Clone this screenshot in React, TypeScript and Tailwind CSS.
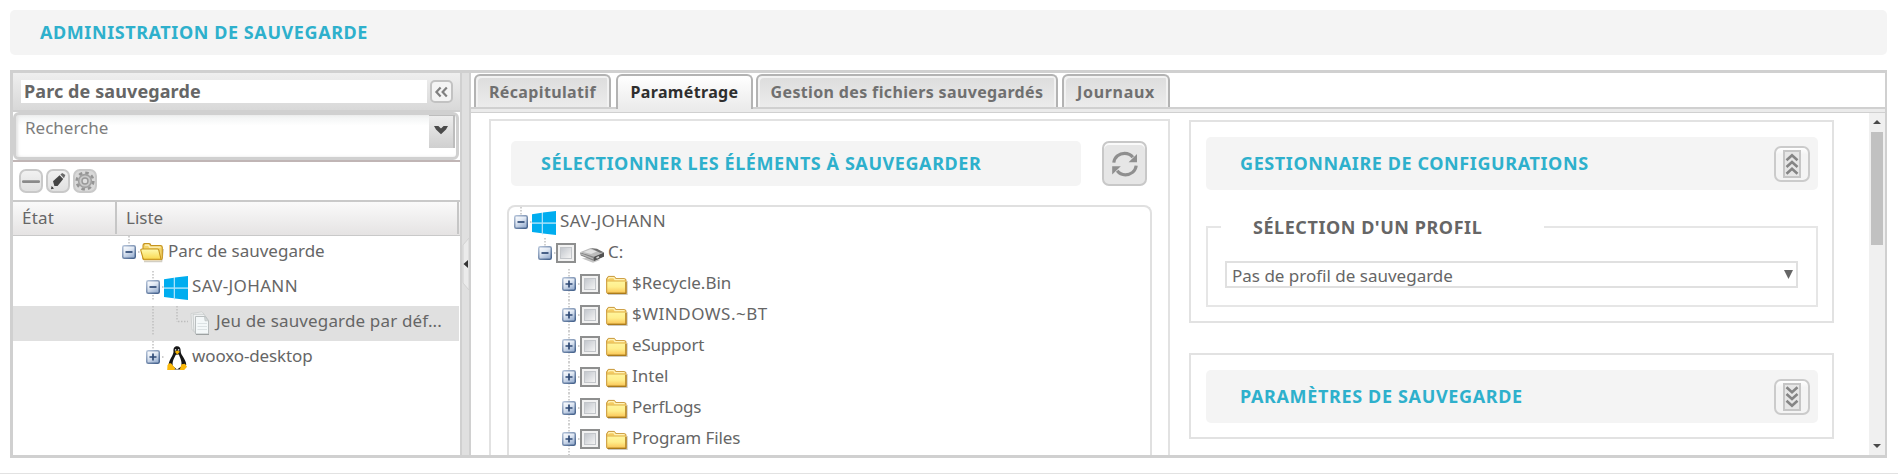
import type { ReactNode } from "react";

type CellKind = "minus-top" | "minus" | "plus-top" | "plus" | "line" | "elbow";

function TreeCell({ kind, h, cy }: { kind: CellKind; h: number; cy: number }) {
  const box = kind !== "line" && kind !== "elbow";
  const plus = kind === "plus" || kind === "plus-top";
  const end = kind === "line" || kind === "minus" || kind === "plus" ? h : kind === "elbow" ? cy : cy - 7;
  return (
    <svg className="shrink-0" width="24" height={h} viewBox={`0 0 24 ${h}`}>
      <defs>
        <linearGradient id="toggleFill" x1="0" y1="0" x2="0.6" y2="1">
          <stop offset="0" stopColor="#ffffff" />
          <stop offset="0.45" stopColor="#e4ebf5" />
          <stop offset="1" stopColor="#9fb4d3" />
        </linearGradient>
        <linearGradient id="toggleEdge" x1="0" y1="0" x2="0.8" y2="1">
          <stop offset="0" stopColor="#b4c3d9" />
          <stop offset="1" stopColor="#4a668f" />
        </linearGradient>
      </defs>
      <path d={`M13 0V${end}`} stroke="#bdbdbd" strokeWidth="1.4" strokeDasharray="1.5 1.5" />
      <path d={kind === "elbow" ? `M14 ${cy}H24` : box ? `M22 ${cy}H24` : ""} stroke="#bdbdbd" strokeWidth="1.4" strokeDasharray="1.5 1.5" />
      {box && (
        <>
          <rect x="6.75" y={cy - 6.25} width="12.5" height="12.5" rx="1.5" fill="url(#toggleFill)" stroke="url(#toggleEdge)" strokeWidth="1.5" />
          <path d={`M9.5 ${cy}H16.5${plus ? `M13 ${cy - 3.5}V${cy + 3.5}` : ""}`} stroke="#2f4a75" strokeWidth="1.7" />
        </>
      )}
    </svg>
  );
}

function WindowsIcon() {
  return (
    <svg className="shrink-0" width="24" height="24" viewBox="0 0 24 24">
      <path fill="#a8e2fa" d="M9.8 1.7 11 1.5V24L9.8 22.3zM0 11.4H24V12.7H0z" />
      <path fill="#00adef" d="M0 3.2 9.8 1.7V11.4H0zM11 1.5 24 0V11.4H11zM0 12.7H9.8V22.3L0 20.9zM11 12.7H24V24L11 22.5z" />
    </svg>
  );
}

function OpenFolderIcon() {
  return (
    <svg className="shrink-0" width="24" height="24" viewBox="0 0 24 24">
      <defs>
        <linearGradient id="openFolder" x1="0" y1="0" x2="0" y2="1">
          <stop offset="0" stopColor="#fffbb0" />
          <stop offset="1" stopColor="#f9d850" />
        </linearGradient>
      </defs>
      <path d="M4 20.5H21.5L23.3 8" stroke="#bfb9aa" strokeWidth="1.6" fill="none" opacity="0.7" />
      <path d="M3 18V4.5Q3 3 4.5 2.6H9Q10.5 2.6 11 4.6H20.5Q22.3 4.6 22.3 6.2V17Q22.3 18.8 20.5 18.8H4Z" fill="#f3d468" stroke="#c6941f" strokeWidth="1.1" />
      <path d="M5 4.2H8.6L9.6 6.2H20.6" stroke="#fff3c0" strokeWidth="1.2" fill="none" />
      <path d="M.8 9.3Q.6 8 2 8H17.4Q18.5 8 18.8 9.2L21 18.2H4.2Q3.2 18.2 3 17.2Z" fill="url(#openFolder)" stroke="#c6941f" strokeWidth="1.1" />
    </svg>
  );
}

function FolderIcon() {
  return (
    <svg className="mt-1.5 shrink-0" width="24" height="21" viewBox="0 0 24 21">
      <defs>
        <linearGradient id="folderFill" x1="0" y1="0" x2="0" y2="1">
          <stop offset="0" stopColor="#fff59d" />
          <stop offset="0.5" stopColor="#ffee8c" />
          <stop offset="1" stopColor="#fbc85a" />
        </linearGradient>
      </defs>
      <path d="M4 19.3H23.1V6" stroke="#b5b0a5" strokeWidth="1.2" fill="none" opacity="0.7" />
      <path d="M2.6 17.5V3.8L4.2 1.4H10.4L12 3.6H20.4Q22 3.6 22 5.2V17.8Q22 18.4 21 18.4H4Q2.6 18.4 2.6 17.5Z" fill="#f3cb62" stroke="#c99a3e" strokeWidth="1" />
      <path d="M4.4 3.8 5.2 2.6H9.8L11 4.7H20.6" stroke="#fff2b8" strokeWidth="1.3" fill="none" />
      <path d="M3 6.2H21.6V17.7H4L3 17Z" fill="url(#folderFill)" stroke="#dbb04e" strokeWidth="0.6" />
      <path d="M3.6 18.3H22V7" stroke="#ad7b1a" strokeWidth="1.2" fill="none" />
    </svg>
  );
}

function DriveIcon() {
  return (
    <svg className="mt-1.5 shrink-0" width="24" height="24" viewBox="0 0 24 24">
      <path d="M2 14.5 13 18.8 20 16 14 13Z" fill="#c4c4c4" />
      <path d="M0 8.4.8 11.6 14 17 24 12.4V8.6L14 11Z" fill="#858585" />
      <path d="M14 12.6V17L24 12.4V8.6Z" fill="#525252" />
      <path d="M0 8.2 10.5 4 24 8.4 14 12.8Z" fill="#bcbcbc" />
      <path d="M3.5 8 10.5 5.2 17 7.4 11 9.9Z" fill="#e2e2e2" />
      <path d="M10.5 4 17 4.8 24 8.4 20 8.8Z" fill="#6f6f6f" />
      <path d="M1 10 13 14.6" stroke="#b8b8b8" strokeWidth="1.2" />
      <path d="M16.5 14 19 12.8" stroke="#d4d4d4" strokeWidth="1.5" />
    </svg>
  );
}

function FilesIcon() {
  return (
    <svg className="mt-[5px] shrink-0" width="24" height="24" viewBox="0 0 24 24">
      <path d="M3 2.5 14 .8 16 3V19H4Z" fill="#f2f3f3" stroke="#cfd2d2" />
      <path d="M5 3.2H16L18 6V21H6Z" fill="#eef0f1" stroke="#c8cccc" />
      <path d="M7.5 5.5H17.5L20.5 9.5V23H7.5Z" fill="#f4f8f9" stroke="#b9bebf" />
      <path d="M16.5 5.5 17 9.8H20.5Z" fill="#d3d8da" stroke="#bcc1c2" strokeWidth="0.7" />
      <path d="M9.5 12.5H19M9.5 15.5H19M9.5 18.5H19" stroke="#dce2e4" />
      <path d="M8 23.5H21" stroke="#9da1a1" />
    </svg>
  );
}

function TuxIcon() {
  return (
    <svg className="mt-[5px] shrink-0" width="24" height="24" viewBox="0 0 24 24">
      <path d="M13 .3C10 .3 9.3 2.6 9.5 5.6 9.7 9 5.8 12.3 4.6 18.5L8 23.6H19L22.3 18.5C21.5 12.3 16.7 9.3 16.7 5.2 16.7 2 15.6.3 13 .3Z" fill="#151515" />
      <path d="M11.8 8.7C10.7 11.5 7.8 15 8.8 20L13 23.4 17.2 20.5C18.5 15 15.6 11.3 14.9 8.6Z" fill="#fff" />
      <path d="M10.8 5.7 13.2 4.4 16 5.8 13.2 8.6Z" fill="#f7b500" />
      <circle cx="11.6" cy="3.9" r="0.8" fill="#ddd" />
      <circle cx="14.6" cy="3.9" r="0.8" fill="#ddd" />
      <path d="M4.6 17.6 7 17.3 11.4 22.4 10.2 24H3.2L3.5 19.5Z" fill="#fcb90a" />
      <path d="M17.5 18.3 21 17.8 23 20.8 20.2 24H15.6Z" fill="#fcb90a" />
    </svg>
  );
}

function Checkbox() {
  return (
    <span className="mt-[5px] mr-1 size-5 shrink-0 border-2 border-[#8e8f8f] bg-[#f2f2f2] p-[2px]">
      <span className="block size-3 border border-[#c3c6ca] bg-linear-to-br from-[#c3c7cd] to-[#f4f4f4]" />
    </span>
  );
}

function RefreshIcon() {
  return (
    <svg width="28" height="28" viewBox="0 0 28 28" fill="none">
      <path d="M2.8 12.6C3.6 6.6 8.4 3.4 13.6 3.4 17.2 3.4 20 4.9 21.8 7.3" stroke="#8f8f8f" strokeWidth="3.2" />
      <path d="M26 4V12.2H17.6Z" fill="#8f8f8f" />
      <path d="M25.2 15.6C24.4 21.4 19.8 24.8 14.4 24.8 10.9 24.8 8 23.2 6.2 20.8" stroke="#8f8f8f" strokeWidth="3.2" />
      <path d="M1.2 24.6V16.2H9.8Z" fill="#8f8f8f" />
    </svg>
  );
}

function TripleChevron({ down = false }: { down?: boolean }) {
  return (
    <span className="flex size-9 items-center justify-center rounded-[7px] border-2 border-[#cbcbcb] bg-linear-to-b from-white to-[#f4f4f4] to-20%">
      <svg width="18" height="28" viewBox="0 0 18 28" fill="none">
        <rect x="1" y="1" width="16" height="26" fill="#e6e6e6" stroke="#c6c6c6" strokeWidth="2" />
        <g transform={down ? "matrix(1 0 0 -1 0 28)" : undefined} stroke="#858585" strokeWidth="2.6">
          <path d="M3.5 10.2 9 5.2 14.5 10.2M3.5 17 9 12 14.5 17M3.5 23.8 9 18.8 14.5 23.8" />
        </g>
      </svg>
    </span>
  );
}

function ToolButton({ children }: { children: ReactNode }) {
  return (
    <span className="flex size-6 items-center justify-center rounded-[7px] border-2 border-[#c9c9c9] bg-linear-to-b from-[#f1f1f1] to-[#e0e0e0]">
      {children}
    </span>
  );
}

function LeftRow({ indent, selected, children }: { indent: string; selected?: boolean; children: ReactNode }) {
  return (
    <div className={`mr-px flex h-[35px] items-start ${indent} ${selected ? "bg-[#e0e0e0]" : ""}`}>{children}</div>
  );
}

const leftText = "ml-1 text-[17px] leading-[29px] whitespace-nowrap";
const rightText = "ml-1 text-[17px] leading-[27px] whitespace-nowrap";

const folders = [
  ["$Recycle.Bin", "tracking-[0px]"],
  ["$WINDOWS.~BT", "tracking-[0.5px]"],
  ["eSupport", "tracking-[-0.2px]"],
  ["Intel", "tracking-[0px]"],
  ["PerfLogs", "tracking-[-0.15px]"],
  ["Program Files", "tracking-[-0.1px]"],
];

function Sidebar() {
  return (
    <aside className="flex w-[447px] shrink-0 flex-col">
      <div className="flex h-[39px] items-start border-b-2 border-[#d0d0d0] bg-linear-to-b from-[#efefef] to-[#d8d8d8] pt-[7px] pl-2">
        <div className="h-[23px] w-[406px] bg-white pl-[3px] text-[18px] leading-[23px] font-bold tracking-[0.1px] whitespace-nowrap">
          Parc de sauvegarde
        </div>
        <span className="ml-[3px] flex h-[23px] w-[23px] items-center justify-center rounded-[5px] border-2 border-[#c2c2c2] bg-[#f4f4f4]">
          <svg width="15" height="14" viewBox="0 0 15 14" fill="none" stroke="#808080" strokeWidth="2.2">
            <path d="M6.6 2.4 2.4 7 6.6 11.6M12.8 2.4 8.6 7 12.8 11.6" />
          </svg>
        </span>
      </div>
      <div className="h-[50px] border-b-2 border-[#c0b5b5]">
        <div className="flex h-12 w-[446px] items-start rounded-[6px] border-3 border-[#d0d0d0] bg-linear-to-b from-[#f0f2f2] to-white to-25% shadow-[inset_2px_0_3px_#e4e4e4]">
          <span className="w-[413px] pl-[9px] text-[17px] leading-[26px] text-[#7d7d7d]">Recherche</span>
          <span className="flex h-[33px] w-[26px] items-center justify-center border-t border-r-2 border-[#bdbdbd] bg-linear-to-b from-[#ededed] to-[#cfcfcf]">
            <svg className="mb-1" width="14" height="10" viewBox="0 0 14 10">
              <path d="M0 1H4.4L7 3.6 9.6 1H14L12 4.4 7 9.2 2 4.4Z" fill="#4a4a4a" />
            </svg>
          </span>
        </div>
      </div>
      <div className="flex h-[38px] items-center gap-[3px] pl-1.5">
        <ToolButton>
          <svg width="18" height="5" viewBox="0 0 18 5"><rect y="1.3" width="18" height="2.6" rx="1.2" fill="#8a8a8a" /></svg>
        </ToolButton>
        <ToolButton>
          <svg width="16" height="18" viewBox="0 0 16 18">
            <path d="M3 9.3 9.6 3.2 13.2 7.1 7.6 14 4.4 13.9Z" fill="#454545" />
            <path d="M10.4 2.5 12.2.9 15.4 3 13.9 6.3Z" fill="#6a6a6a" />
            <path d="M1 17.2 1.6 14 4 16.4Z" fill="#3a3a3a" />
          </svg>
        </ToolButton>
        <span className="flex size-6 items-center justify-center rounded-[7px] border-2 border-[#c9c9c9] bg-[#d9d9d9]">
          <svg width="20" height="20" viewBox="0 0 20 20" fill="none">
            <circle cx="10" cy="10" r="8.3" stroke="#959595" strokeWidth="2.6" strokeDasharray="3.5 3.02" />
            <circle cx="10" cy="10" r="6.4" fill="#c9c9c9" stroke="#a0a0a0" strokeWidth="1.6" />
            <circle cx="10" cy="10" r="3" fill="#dedede" stroke="#999" strokeWidth="1.4" />
          </svg>
        </span>
      </div>
      <div className="flex h-9 border-t-2 border-b border-[#c9c9c9] bg-linear-to-b from-[#fafafa] to-[#e5e3e3] text-[17px] leading-[31px]">
        <span className="mb-px w-[104px] border-r-2 border-[#c6c6c6] pl-[9px] tracking-[0.2px]">État</span>
        <span className="mr-px mb-px flex-1 border-r-2 border-[#c6c6c6] pl-[9px]">Liste</span>
      </div>
      <LeftRow indent="pl-[103px]">
        <TreeCell kind="minus-top" h={29} cy={16} />
        <span className="mt-[5px]"><OpenFolderIcon /></span>
        <span className={`${leftText} tracking-[0px]`}>Parc de sauvegarde</span>
      </LeftRow>
      <LeftRow indent="pl-[127px]">
        <TreeCell kind="minus" h={29} cy={16} />
        <span className="mt-[5px]"><WindowsIcon /></span>
        <span className={`${leftText} tracking-[0.35px]`}>SAV-JOHANN</span>
      </LeftRow>
      <LeftRow indent="pl-[127px]" selected>
        <TreeCell kind="line" h={29} cy={16} />
        <TreeCell kind="elbow" h={29} cy={15.5} />
        <FilesIcon />
        <span className={`${leftText} tracking-[0.15px]`}>Jeu de sauvegarde par déf...</span>
      </LeftRow>
      <LeftRow indent="pl-[127px]">
        <TreeCell kind="plus-top" h={29} cy={16} />
        <TuxIcon />
        <span className={`${leftText} tracking-[-0.12px]`}>wooxo-desktop</span>
      </LeftRow>
    </aside>
  );
}

function Splitter() {
  return (
    <div className="flex w-[11px] shrink-0 flex-col border-x-2 border-[#d0d0d0] bg-[#e0e0e0] pt-[165px]">
      <svg width="7" height="52" viewBox="0 0 7 52">
        <path d="M7 0 1 7V45L7 52Z" fill="#ebebeb" stroke="#d2d2d2" />
        <path d="M6 22V30L1.5 26Z" fill="#333" />
      </svg>
    </div>
  );
}

function Tab({ size, label, active }: { size: string; label: string; active?: boolean }) {
  return (
    <div
      className={`rounded-t-[6px] border-2 border-b-0 text-center text-[16px] leading-[32px] font-bold whitespace-nowrap ${size} ${
        active
          ? "relative z-10 h-[35px] border-[#b3b3b3] bg-linear-to-b from-white to-[#ebebeb] text-[#2e2e2e]"
          : "h-[33px] border-[#b3b3b3] bg-linear-to-b from-[#dcdcdc] to-[#ececec] text-[#707070] shadow-[inset_2px_2px_0_#f2f2f2,inset_-2px_0_0_#f2f2f2]"
      }`}
    >
      {label}
    </div>
  );
}

const heading = "rounded-[5px] bg-[#f4f4f4] text-[18px] font-bold text-[#2eb0cc] whitespace-nowrap";

function SourcePanel() {
  return (
    <section className="mt-1.5 ml-[18px] flex w-[681px] shrink-0 flex-col border-2 border-b-0 border-[#e2e2e2] pt-5">
      <div className="flex">
        <h2 className={`${heading} ml-5 h-[45px] w-[570px] pl-[30px] leading-[45px] tracking-[0.57px]`}>
          SÉLECTIONNER LES ÉLÉMENTS À SAUVEGARDER
        </h2>
        <span className="ml-[21px] flex size-[45px] items-center justify-center rounded-[7px] border-2 border-[#c8c8c8] bg-[#e6e6e6] shadow-[inset_0_2px_0_#fafafa]">
          <RefreshIcon />
        </span>
      </div>
      <div className="mt-[19px] ml-4 w-[645px] flex-1 rounded-t-[8px] border-2 border-b-0 border-[#e0e0e0]">
        <div className="-ml-px flex h-[31px] items-start">
          <TreeCell kind="minus-top" h={31} cy={15} />
          <span className="mt-1"><WindowsIcon /></span>
          <span className={`${rightText} tracking-[0.35px]`}>SAV-JOHANN</span>
        </div>
        <div className="flex h-[31px] items-start pl-[23px]">
          <TreeCell kind="minus-top" h={31} cy={15} />
          <Checkbox />
          <DriveIcon />
          <span className={rightText}>C:</span>
        </div>
        {folders.map(([name, tracking]) => (
          <div key={name} className="flex h-[31px] items-start pl-[47px]">
            <TreeCell kind="plus" h={31} cy={15} />
            <Checkbox />
            <FolderIcon />
            <span className={`${rightText} ${tracking}`}>{name}</span>
          </div>
        ))}
      </div>
    </section>
  );
}

function ConfigColumn() {
  return (
    <div className="mt-[7px] ml-[19px] flex w-[645px] shrink-0 flex-col gap-[30px]">
      <section className="h-[203px] border-2 border-[#e2e2e2] px-[15px] pt-[15px]">
        <div className={`${heading} flex h-[53px] w-[612px] items-center justify-between pr-2 pl-[34px] tracking-[0.6px]`}>
          <h2>GESTIONNAIRE DE CONFIGURATIONS</h2>
          <TripleChevron />
        </div>
        <fieldset className="mt-[23px] h-[94px] w-[612px] border-2 border-[#e6e6e6] pl-[13px]">
          <legend className="h-[28px] w-[323px] pl-[32px] text-[18px] leading-[28px] font-bold tracking-[0.55px]">
            SÉLECTION D'UN PROFIL
          </legend>
          <div className="mt-[20px] ml-1 flex h-[27px] w-[573px] items-center justify-between border-2 border-[#e0e0e0] pr-[3px] pl-[5px] text-[17px] leading-[23px]">
            <span className="pt-px">Pas de profil de sauvegarde</span>
            <svg width="9" height="9" viewBox="0 0 9 9"><path d="M0 0H9L4.5 9Z" fill="#666" /></svg>
          </div>
        </fieldset>
      </section>
      <section className="h-[86px] border-2 border-[#e2e2e2] px-[15px] pt-[15px]">
        <div className={`${heading} flex h-[53px] w-[612px] items-center justify-between pr-2 pl-[34px] tracking-[0.65px]`}>
          <h2>PARAMÈTRES DE SAUVEGARDE</h2>
          <TripleChevron down />
        </div>
      </section>
    </div>
  );
}

export default function App() {
  return (
    <div className="h-[474px] w-[1898px] overflow-hidden border-b border-[#e2e2e2] bg-white px-2.5 pt-2.5 font-['Noto_Sans',sans-serif] text-[#666]">
      <h1 className={`${heading} h-[45px] w-[1877px] pl-[30px] leading-[45px] tracking-[0.58px]`}>
        ADMINISTRATION DE SAUVEGARDE
      </h1>
      <div className="mt-[15px] flex h-[388px] w-[1877px] overflow-hidden border-3 border-r-2 border-[#d0d0d0]">
        <Sidebar />
        <Splitter />
        <main className="flex min-w-0 flex-1 flex-col">
          <div className="flex h-[34px] items-start pt-px pl-[3px]">
            <Tab size="w-[137px] tracking-[0.35px]" label="Récapitulatif" />
            <Tab size="ml-[5px] w-[137px] tracking-[0.35px]" label="Paramétrage" active />
            <Tab size="ml-[3px] w-[302px] tracking-[0.35px]" label="Gestion des fichiers sauvegardés" />
            <Tab size="ml-1 w-[108px] tracking-[0.7px]" label="Journaux" />
          </div>
          <div className="h-1.5 shrink-0 border-t-2 border-b border-[#d0d0d0] bg-[#ebebeb]" />
          <div className="flex min-h-0 flex-1 overflow-hidden">
            <SourcePanel />
            <ConfigColumn />
            <div className="ml-auto flex w-4 flex-col items-center bg-[#f0f0f0]">
              <svg className="mt-[7px]" width="8" height="4" viewBox="0 0 8 4"><path d="M0 4 4 0 8 4Z" fill="#4a4a4a" /></svg>
              <div className="mt-2 h-[113px] w-3 bg-[#c1c1c1]" />
              <svg className="mt-auto mb-[7px]" width="8" height="4" viewBox="0 0 8 4"><path d="M0 0 4 4 8 0Z" fill="#4a4a4a" /></svg>
            </div>
          </div>
        </main>
      </div>
    </div>
  );
}
